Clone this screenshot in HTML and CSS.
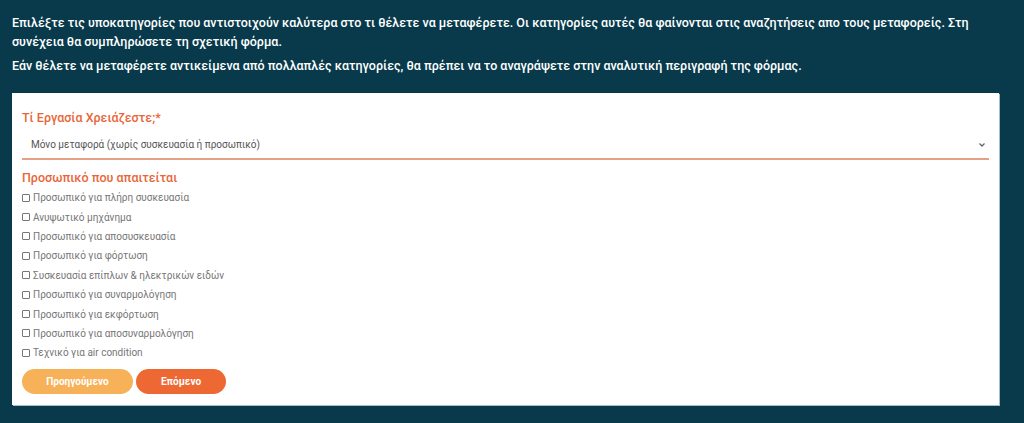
FILE: index.html
```html
<!DOCTYPE html>
<html lang="el">
<head>
<meta charset="utf-8">
<title>Φόρμα</title>
<link rel="stylesheet" href="styles.css">
</head>
<body>
<div class="intro">
  <p>Επιλέξτε τις υποκατηγορίες που αντιστοιχούν καλύτερα στο τι θέλετε να μεταφέρετε. Οι κατηγορίες αυτές θα φαίνονται στις αναζητήσεις απο τους μεταφορείς. Στη συνέχεια θα συμπληρώσετε τη σχετική φόρμα.</p>
  <p>Εάν θέλετε να μεταφέρετε αντικείμενα από πολλαπλές κατηγορίες, θα πρέπει να το αναγράψετε στην αναλυτική περιγραφή της φόρμας.</p>
</div>
<div class="panel">
  <h2 class="title">Τί Εργασία Χρειάζεστε;*</h2>
  <div class="select">
    <span>Μόνο μεταφορά (χωρίς συσκευασία ή προσωπικό)</span>
    <svg class="chev" width="8" height="6" viewBox="0 0 8 6"><path d="M1.5 1.5 L4 4 L6.5 1.5" fill="none" stroke="#666" stroke-width="1.3"/></svg>
  </div>
  <h2 class="title sub">Προσωπικό που απαιτείται</h2>
  <ul class="checks">
    <li><span class="box"></span>Προσωπικό για πλήρη συσκευασία</li>
    <li><span class="box"></span>Ανυψωτικό μηχάνημα</li>
    <li><span class="box"></span>Προσωπικό για αποσυσκευασία</li>
    <li><span class="box"></span>Προσωπικό για φόρτωση</li>
    <li><span class="box"></span>Συσκευασία επίπλων &amp; ηλεκτρικών ειδών</li>
    <li><span class="box"></span>Προσωπικό για συναρμολόγηση</li>
    <li><span class="box"></span>Προσωπικό για εκφόρτωση</li>
    <li><span class="box"></span>Προσωπικό για αποσυναρμολόγηση</li>
    <li><span class="box"></span>Τεχνικό για air condition</li>
  </ul>
  <div class="buttons">
    <button class="btn prev">Προηγούμενο</button>
    <button class="btn next">Επόμενο</button>
  </div>
</div>
</body>
</html>
```
FILE: styles.css
```css
html, body {
  margin: 0;
  padding: 0;
  background: #083a4b;
  height: 100%;
}
body {
  font-family: Roboto, "Noto Sans", sans-serif;
  padding: 13px 12px 0 12px;
  box-sizing: border-box;
  overflow: hidden;
}
.intro p {
  margin: 0 0 5px 0;
  color: #ffffff;
  font-size: 12.5px;
  font-weight: 500;
  line-height: 19px;
}
.panel {
  margin-top: 18px;
  width: 987px;
  background: #ffffff;
  box-sizing: border-box;
  padding: 16px 10px 11px 10px;
  box-shadow: 1px 1px 0 #9ec3cc;
}
.title {
  margin: 0;
  color: #e8673a;
  font-size: 12.5px;
  font-weight: 500;
  line-height: 18px;
}
.select {
  display: flex;
  align-items: center;
  justify-content: space-between;
  height: 28px;
  padding: 0 3px 0 9px;
  margin-top: 3px;
  border-bottom: 2px solid #e3a185;
  color: #555555;
  font-size: 10px;
}
.chev {
  margin-top: 1px;
}
.sub {
  margin-top: 9px;
}
.checks {
  list-style: none;
  margin: 1px 0 0 0;
  padding: 0;
}
.checks li {
  display: flex;
  align-items: center;
  height: 19.4px;
  color: #767676;
  font-size: 10px;
}
.box {
  width: 6px;
  height: 6px;
  border: 1px solid #777;
  border-radius: 1px;
  margin-right: 3px;
  flex: none;
}
.buttons {
  display: flex;
  gap: 3px;
  margin-top: 6px;
}
.btn {
  border: none;
  height: 25px;
  border-radius: 13px;
  color: #ffffff;
  font-family: Roboto, "Noto Sans", sans-serif;
  font-size: 10px;
  font-weight: 700;
  padding: 0;
}
.prev {
  width: 111px;
  background: #f6b159;
}
.next {
  width: 90px;
  background: #ee6833;
}
```
